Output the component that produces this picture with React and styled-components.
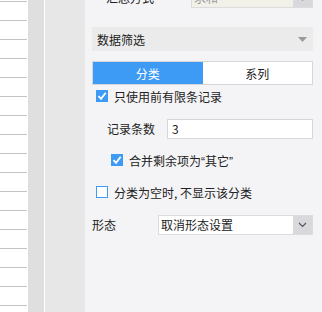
import React from "react";
import styled, { createGlobalStyle } from "styled-components";

const Global = createGlobalStyle`
  html, body { margin: 0; padding: 0; }
  body { font-family: "Noto Sans CJK SC", "Liberation Sans", sans-serif; font-size: 12px; color: #222; }
`;

const Page = styled.div`
  display: flex;
  width: 322px;
  height: 312px;
  overflow: hidden;
`;

const List = styled.div`
  width: 28px;
  background: #fff;
  display: flex;
  flex-direction: column;
  padding-top: 10px;
  margin-top: -9px;
`;

const ListRow = styled.div`
  height: 18px;
  flex: none;
  border-top: 1px solid #c4c4c4;
  margin-right: 1px;
`;

const Strip = styled.div`
  width: ${(p) => p.$w}px;
  background: ${(p) => p.$bg};
  flex: none;
`;

const Panel = styled.div`
  flex: 1;
  background: #f4f4f6;
  padding: 0 9px 0 7px;
  display: flex;
  flex-direction: column;
`;

const FieldRow = styled.div`
  display: flex;
  align-items: center;
  height: 20px;
  flex: none;
  margin-top: ${(p) => p.$mt || 0}px;
  padding-left: ${(p) => p.$pl || 0}px;
`;

const Label = styled.span`
  width: ${(p) => p.$w}px;
  flex: none;
  line-height: 20px;
  color: #222;
`;

const Select = styled.div`
  flex: 1;
  display: flex;
  height: 20px;
  box-sizing: border-box;
  border: 1px solid #dcdcdc;
  background: ${(p) => (p.$disabled ? "#f1f1e9" : "#fff")};
`;

const SelectText = styled.span`
  flex: 1;
  padding-left: 2px;
  line-height: 18px;
  color: ${(p) => (p.$disabled ? "#999" : "#222")};
`;

const Arrow = styled.span`
  width: 19px;
  background: #d9d9dd;
  display: flex;
  align-items: center;
  justify-content: center;
`;

const Header = styled.div`
  margin-top: 19px;
  height: 24px;
  flex: none;
  background: #ebebeb;
  display: flex;
  align-items: center;
  justify-content: space-between;
  padding: 0 6px 0 5px;
`;

const Tabs = styled.div`
  margin-top: 10px;
  display: flex;
  height: 24px;
  flex: none;
  box-sizing: border-box;
  border: 1px solid #d6d6d8;
  background: #fff;
`;

const Tab = styled.div`
  flex: 1;
  display: flex;
  align-items: center;
  justify-content: center;
  background: ${(p) => (p.$active ? "#3d9bf5" : "#fff")};
  color: ${(p) => (p.$active ? "#fff" : "#222")};
`;

const Check = styled.label`
  display: flex;
  align-items: center;
  gap: 6px;
  height: 14px;
  flex: none;
  margin-top: ${(p) => p.$mt}px;
  padding-left: ${(p) => p.$pl}px;
`;

const Box = styled.span`
  width: 12px;
  height: 12px;
  box-sizing: border-box;
  flex: none;
  background: ${(p) => (p.$on ? "#3d9bf5" : "#fff")};
  border: 1px solid #3d9bf5;
  display: flex;
  align-items: center;
  justify-content: center;
`;

const Quote = styled.span`
  font-family: "Liberation Sans", sans-serif;
`;

const Input = styled.div`
  flex: 1;
  height: 20px;
  box-sizing: border-box;
  border: 1px solid #d6d6d8;
  background: #fff;
  padding-left: 4px;
  line-height: 18px;
`;

const Tick = () => (
  <svg width="10" height="10" viewBox="0 0 10 10">
    <path d="M1.5 5.2 L4 7.8 L8.7 1.8" fill="none" stroke="#fff" strokeWidth="1.8" />
  </svg>
);

const Chevron = () => (
  <svg width="9" height="6" viewBox="0 0 9 6">
    <path d="M1 1 L4.5 4.5 L8 1" fill="none" stroke="#555" strokeWidth="1.2" />
  </svg>
);

const Tri = ({ c = "#9a9a9a" }) => (
  <svg width="9" height="5" viewBox="0 0 9 5">
    <path d="M0 0 H9 L4.5 5 Z" fill={c} />
  </svg>
);

export default function App() {
  const rows = Array.from({ length: 18 });
  return (
    <Page>
      <Global />
      <List>
        {rows.map((_, i) => (
          <ListRow key={i} />
        ))}
      </List>
      <Strip $w={16} $bg="#dfdfdf" />
      <Strip $w={1} $bg="#ffffff" />
      <Strip $w={40} $bg="#e7e7e7" />
      <Panel>
        <FieldRow $mt={-12} $pl={14}>
          <Label $w={85}>汇总方式</Label>
          <Select $disabled>
            <SelectText $disabled>求和</SelectText>
            <Arrow>
              <Tri c="#888" />
            </Arrow>
          </Select>
        </FieldRow>
        <Header>
          <span>数据筛选</span>
          <Tri />
        </Header>
        <Tabs>
          <Tab $active>分类</Tab>
          <Tab>系列</Tab>
        </Tabs>
        <Check $mt={4} $pl={4}>
          <Box $on>
            <Tick />
          </Box>
          <span>只使用前有限条记录</span>
        </Check>
        <FieldRow $mt={16} $pl={15}>
          <Label $w={60}>记录条数</Label>
          <Input>3</Input>
        </FieldRow>
        <Check $mt={14} $pl={19}>
          <Box $on>
            <Tick />
          </Box>
          <span>
            合并剩余项为<Quote>“</Quote>其它<Quote>”</Quote>
          </span>
        </Check>
        <Check $mt={18} $pl={4}>
          <Box />
          <span>分类为空时, 不显示该分类</span>
        </Check>
        <FieldRow $mt={16}>
          <Label $w={66}>形态</Label>
          <Select>
            <SelectText>取消形态设置</SelectText>
            <Arrow>
              <Chevron />
            </Arrow>
          </Select>
        </FieldRow>
      </Panel>
    </Page>
  );
}
